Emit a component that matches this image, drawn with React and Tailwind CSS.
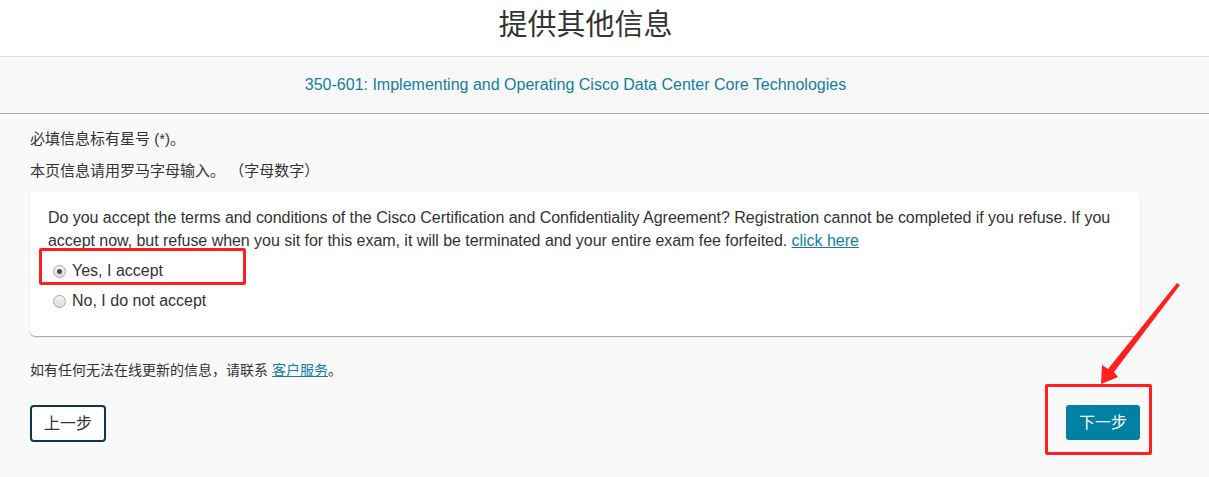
import React from "react";

const font = { fontFamily: '"Liberation Sans", Arial, "Noto Sans CJK SC", sans-serif' };

function Radio({ checked }) {
  return (
    <span className="relative inline-flex w-[13px] h-[13px] rounded-full border border-[#a9a9a9] bg-gradient-to-b from-[#f4f4f4] to-[#dcdcdc] items-center justify-center shrink-0">
      {checked && <span className="w-[5px] h-[5px] rounded-full bg-[#4a4a4a]" />}
    </span>
  );
}

export default function App() {
  return (
    <div className="relative min-h-[477px] bg-[#f9f9f9] text-[#333]" style={font}>
      <header className="h-[57px] bg-white border-b border-[#dedede] flex items-center justify-center pr-[38px]">
        <h1 className="text-[29px] leading-none text-[#333] -mt-[6px]">提供其他信息</h1>
      </header>
      <div className="h-[57px] bg-[#f8f8f8] border-b border-[#a8a8a8] flex items-center justify-center pr-[58px]">
        <span className="text-[16px] text-[#127f9f]">350-601: Implementing and Operating Cisco Data Center Core Technologies</span>
      </div>
      <main className="px-[30px] pt-[15px]">
        <p className="text-[15px] leading-[20px]">必填信息标有星号 (*)。</p>
        <p className="text-[15px] leading-[20px] mt-[12px]">本页信息请用罗马字母输入。 （字母数字）</p>
        <div className="w-[1110px] mt-[11px] bg-white rounded-[5px] shadow-[0_1px_1px_rgba(0,0,0,0.35)] pt-[14px] pb-[20px] px-[18px]">
          <p className="text-[16px] leading-[23px] text-[#333] tracking-[-0.04px]">
            Do you accept the terms and conditions of the Cisco Certification and Confidentiality Agreement? Registration cannot be completed if you refuse. If you accept now, but refuse when you sit for this exam, it will be terminated and your entire exam fee forfeited.{" "}
            <a className="text-[#127f9f] underline">click here</a>
          </p>
          <div className="mt-[4px]">
            <label className="flex items-center h-[30px] pl-[5px] gap-[6px] text-[16px]">
              <Radio checked />
              <span>Yes, I accept</span>
            </label>
            <label className="flex items-center h-[30px] pl-[5px] gap-[6px] text-[16px]">
              <Radio />
              <span>No, I do not accept</span>
            </label>
          </div>
        </div>
        <p className="text-[14px] leading-[20px] mt-[24px]">
          如有任何无法在线更新的信息，请联系 <a className="text-[#127f9f] underline">客户服务</a>。
        </p>
        <div className="w-[1110px] flex justify-between items-start mt-[25px]">
          <button className="w-[76px] h-[37px] border-2 border-[#0f3456] rounded-[4px] bg-white text-[16px] text-[#333]">上一步</button>
          <button className="w-[74px] h-[35px] rounded-[3px] bg-[#0080a3] text-[16px] text-white">下一步</button>
        </div>
      </main>

      {/* annotations */}
      <div className="absolute left-[39px] top-[248px] w-[207px] h-[37px] border-[3px] border-[#ff1f1f] rounded-[2px] pointer-events-none" />
      <div className="absolute left-[1045px] top-[384px] w-[107px] h-[71px] border-[3px] border-[#ff1f1f] rounded-[2px] pointer-events-none" />
      <svg className="absolute left-0 top-0 pointer-events-none" width="1209" height="477" viewBox="0 0 1209 477">
        <polygon
          points="1177,283 1180,285 1114,372 1118,377 1101,384 1102,365 1108,369"
          fill="#ff1f1f"
        />
      </svg>
    </div>
  );
}
